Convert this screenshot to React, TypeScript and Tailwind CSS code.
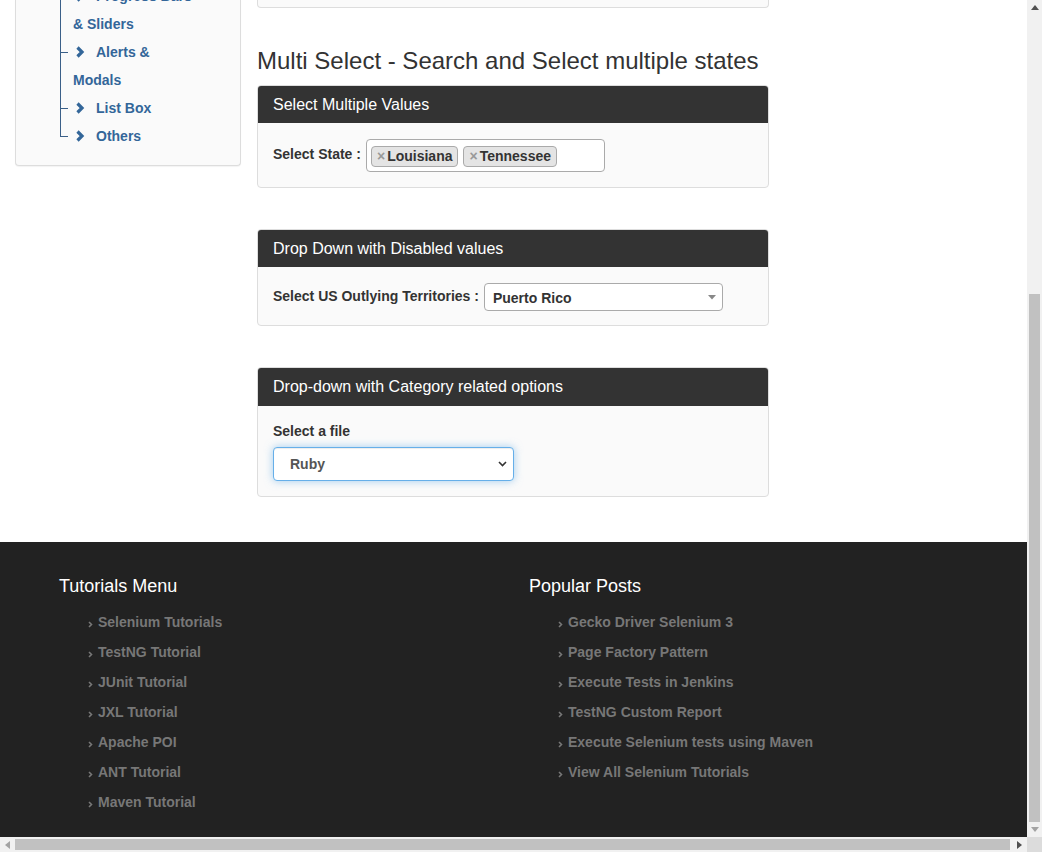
import React from 'react';

const treeItems = [
  { label: 'Progress Bars & Sliders', last: false },
  { label: 'Alerts & Modals', last: false },
  { label: 'List Box', last: false },
  { label: 'Others', last: true },
];

const tutorials = [
  'Selenium Tutorials',
  'TestNG Tutorial',
  'JUnit Tutorial',
  'JXL Tutorial',
  'Apache POI',
  'ANT Tutorial',
  'Maven Tutorial',
];

const posts = [
  'Gecko Driver Selenium 3',
  'Page Factory Pattern',
  'Execute Tests in Jenkins',
  'TestNG Custom Report',
  'Execute Selenium tests using Maven',
  'View All Selenium Tutorials',
];

function Chevron() {
  return (
    <svg width="10" height="12" viewBox="0 0 10 12" className="inline-block align-[-1px]">
      <polyline points="2.5,1.5 7,6 2.5,10.5" fill="none" stroke="currentColor" strokeWidth="3.2" strokeLinejoin="miter" />
    </svg>
  );
}

function SmallAngle() {
  return (
    <svg width="5" height="7" viewBox="0 0 5 7" className="mr-[5px] mt-[4px] shrink-0">
      <polyline points="1,1 3.5,3.5 1,6" fill="none" stroke="#777" strokeWidth="1.6" />
    </svg>
  );
}

function Sidebar() {
  return (
    <div className="h-[166px] w-[226px] shrink-0 overflow-hidden rounded-b-[4px] border border-t-0 border-[#ddd] bg-[#fafafa] shadow-[0_1px_1px_rgba(0,0,0,0.05)]">
      <ul className="-mt-[18px] pl-[57px]">
        {treeItems.map((item) => (
          <li key={item.label} className="relative w-[122px] text-[14px] font-bold leading-[28px] text-[#336699]">
            <span className={`absolute -left-[13px] top-0 w-px bg-[#3a5f88] ${item.last ? 'h-[14px]' : 'h-full'}`} />
            <span className="absolute -left-[13px] top-[14px] h-px w-[8px] bg-[#3a5f88]" />
            <span className="inline-block w-[23px] pl-[2px]">
              <Chevron />
            </span>
            {item.label}
          </li>
        ))}
      </ul>
    </div>
  );
}

function PanelHeader({ title, h }: { title: string; h: string }) {
  return (
    <div className={`${h} flex items-center bg-[#333] px-[15px] text-[16px] text-white`}>{title}</div>
  );
}

function MainColumn() {
  return (
    <div className="flex w-[512px] flex-col">
      <div className="h-[8px] rounded-b-[4px] border border-t-0 border-[#ddd] bg-[#fafafa]" />

      <h3 className="mt-[39px] mb-[11px] h-[27px] text-[24px] leading-[27px] text-[#333]">
        Multi Select - Search and Select multiple states
      </h3>

      {/* Multi select */}
      <div className="overflow-hidden rounded-[4px] border border-[#ddd] bg-[#fafafa]">
        <PanelHeader title="Select Multiple Values" h="h-[37px]" />
        <div className="flex items-center px-[15px] pt-[16px] pb-[15px]">
          <span className="-mt-[3px] mr-[5px] text-[14px] font-bold text-[#333]">Select State :</span>
          <div className="flex h-[33px] w-[239px] items-center gap-[5px] rounded-[4px] border border-[#aaa] bg-white pl-[4px]">
            {['Louisiana', 'Tennessee'].map((s) => (
              <span
                key={s}
                className="mt-[1px] flex h-[21px] items-center rounded-[4px] border border-[#aaa] bg-[#e4e4e4] px-[5px] text-[14px] font-bold text-[#333]"
              >
                <span className="mr-[2px] font-bold text-[#999]">×</span>
                {s}
              </span>
            ))}
          </div>
        </div>
      </div>

      {/* Disabled values */}
      <div className="mt-[41px] overflow-hidden rounded-[4px] border border-[#ddd] bg-[#fafafa]">
        <PanelHeader title="Drop Down with Disabled values" h="h-[37px]" />
        <div className="flex items-center px-[15px] pt-[16px] pb-[14px]">
          <span className="-mt-[2px] mr-[5px] text-[14px] font-bold text-[#333]">Select US Outlying Territories :</span>
          <div className="flex h-[28px] w-[239px] items-center justify-between rounded-[4px] border border-[#aaa] bg-white pl-[8px] pr-[6px]">
            <span className="mt-[2px] text-[14px] font-bold text-[#333]">Puerto Rico</span>
            <svg width="8" height="5" viewBox="0 0 8 5">
              <polygon points="0,0 8,0 4,4.5" fill="#888" />
            </svg>
          </div>
        </div>
      </div>

      {/* Category */}
      <div className="mt-[41px] overflow-hidden rounded-[4px] border border-[#ddd] bg-[#fafafa]">
        <PanelHeader title="Drop-down with Category related options" h="h-[38px]" />
        <div className="px-[15px] pt-[15px] pb-[15px]">
          <div className="mb-[6px] h-[20px] text-[14px] font-bold leading-[20px] text-[#333]">Select a file</div>
          <div className="flex h-[34px] w-[241px] items-center justify-between rounded-[4px] border border-[#66afe9] bg-white pl-[16px] pr-[6px] shadow-[inset_0_1px_1px_rgba(0,0,0,0.075),0_0_8px_rgba(102,175,233,0.6)]">
            <span className="text-[14px] font-bold text-[#555]">Ruby</span>
            <svg width="9" height="6" viewBox="0 0 9 6">
              <polyline points="1,1 4.5,4.5 8,1" fill="none" stroke="#333" strokeWidth="1.6" />
            </svg>
          </div>
        </div>
      </div>
    </div>
  );
}

function FooterColumn({ title, items }: { title: string; items: string[] }) {
  return (
    <div className="w-[470px]">
      <h4 className="h-[20px] text-[18px] leading-[20px] text-white">{title}</h4>
      <ul className="mt-[11px] pl-[29px]">
        {items.map((t) => (
          <li key={t} className="flex h-[30px] items-center text-[14px] font-bold text-[#777]">
            <SmallAngle />
            {t}
          </li>
        ))}
      </ul>
    </div>
  );
}

export default function App() {
  return (
    <div className="flex h-[852px] w-[1042px] flex-col overflow-hidden font-['Liberation_Sans',Arial,sans-serif]">
      <div className="flex min-h-0 flex-1">
        <div className="flex w-[1027px] flex-col bg-white">
          <div className="flex h-[542px] gap-[16px] px-[15px]">
            <Sidebar />
            <MainColumn />
          </div>
          <footer className="flex flex-1 bg-[#222] pl-[59px] pt-[34px]">
            <FooterColumn title="Tutorials Menu" items={tutorials} />
            <FooterColumn title="Popular Posts" items={posts} />
          </footer>
        </div>
        {/* vertical scrollbar */}
        <div className="flex w-[15px] flex-col bg-[#f1f1f1]">
          <div className="flex h-[15px] items-center justify-center">
            <svg width="8" height="5" viewBox="0 0 8 5">
              <polygon points="0,5 8,5 4,0" fill="#505050" />
            </svg>
          </div>
          <div className="flex-1" />
          <div className="mx-[2px] h-[528px] bg-[#c1c1c1]" />
          <div className="flex h-[15px] items-center justify-center">
            <svg width="8" height="5" viewBox="0 0 8 5">
              <polygon points="0,0 8,0 4,5" fill="#a3a3a3" />
            </svg>
          </div>
        </div>
      </div>
      {/* horizontal scrollbar */}
      <div className="flex h-[15px]">
        <div className="flex w-[1027px] items-center bg-[#f1f1f1]">
          <div className="flex h-[15px] w-[15px] items-center justify-center">
            <svg width="5" height="8" viewBox="0 0 5 8">
              <polygon points="5,0 5,8 0,4" fill="#a3a3a3" />
            </svg>
          </div>
          <div className="h-[11px] w-[995px] bg-[#c1c1c1]" />
          <div className="flex-1" />
          <div className="flex h-[15px] w-[15px] items-center justify-center">
            <svg width="5" height="8" viewBox="0 0 5 8">
              <polygon points="0,0 0,8 5,4" fill="#505050" />
            </svg>
          </div>
        </div>
        <div className="w-[15px] bg-[#dcdcdc]" />
      </div>
    </div>
  );
}
